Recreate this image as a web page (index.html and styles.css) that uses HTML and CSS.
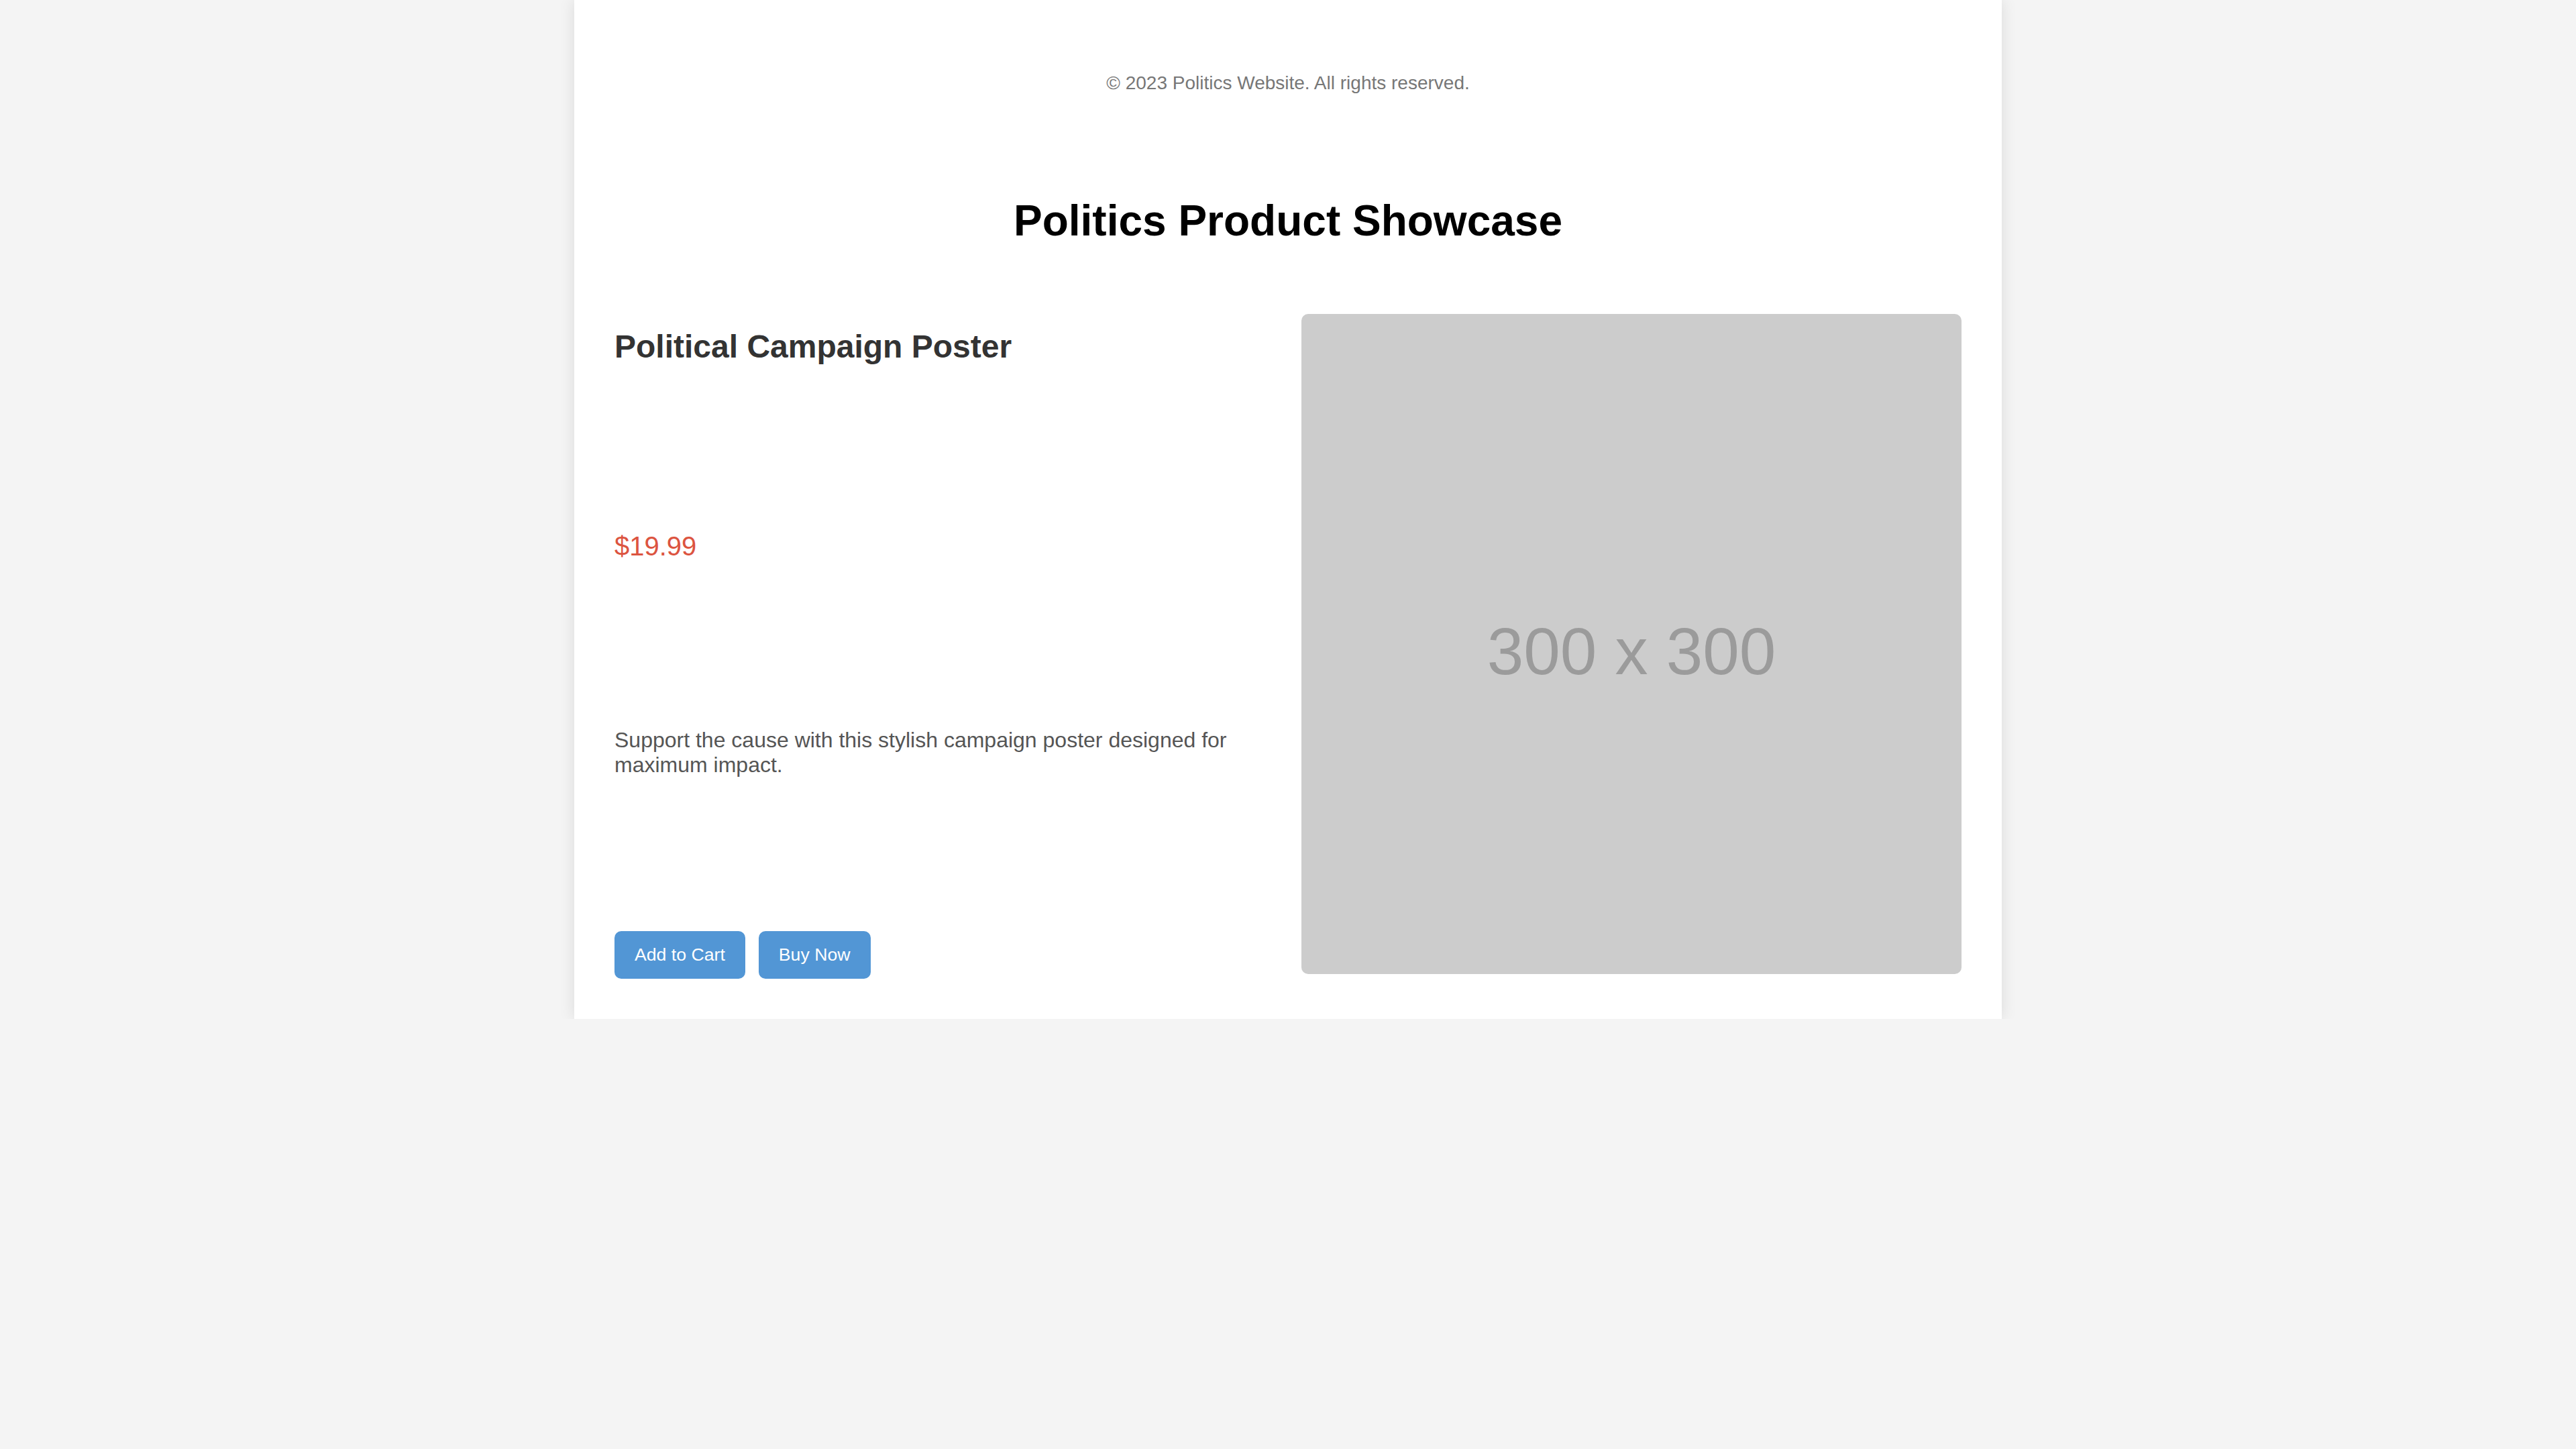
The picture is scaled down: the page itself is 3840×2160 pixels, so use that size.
FILE: index.html
```html
<!DOCTYPE html>
<html lang="en">
<head>
<meta charset="utf-8">
<title>Politics Product Showcase</title>
<link rel="stylesheet" href="styles.css">
</head>
<body>
<div class="card">
  <p class="copyright">&copy; 2023 Politics Website. All rights reserved.</p>
  <h1 class="title">Politics Product Showcase</h1>
  <div class="product">
    <div class="info">
      <h2 class="name">Political Campaign Poster</h2>
      <p class="price">$19.99</p>
      <p class="desc">Support the cause with this stylish campaign poster designed for maximum impact.</p>
      <div class="actions">
        <button class="btn">Add to Cart</button>
        <button class="btn">Buy Now</button>
      </div>
    </div>
    <div class="media">
      <div class="placeholder">300 x 300</div>
    </div>
  </div>
</div>
</body>
</html>
```

FILE: styles.css
```css
html, body {
  margin: 0;
  padding: 0;
}

body {
  background: #f4f4f4;
  font-family: "Liberation Sans", Arial, Helvetica, sans-serif;
  font-size: 32px;
  color: #333;
}

.card {
  width: 2128px;
  margin: 0 auto;
  padding: 0 60px 60px;
  box-sizing: border-box;
  background: #fff;
  box-shadow: 0 0 22px rgba(0, 0, 0, 0.11);
}

.copyright {
  margin: 0;
  padding-top: 108px;
  font-size: 28px;
  line-height: normal;
  color: #777;
  text-align: center;
}

.title {
  margin: 152px 0 102px;
  font-size: 64px;
  font-weight: bold;
  line-height: normal;
  color: #000;
  text-align: center;
}

.product {
  display: flex;
  gap: 40px;
}

.info {
  flex: 1;
  display: flex;
  flex-direction: column;
  justify-content: space-between;
}

.name {
  margin: 20px 0;
  padding-top: 1px;
  font-size: 48px;
  font-weight: bold;
  line-height: normal;
  color: #333;
}

.price {
  margin: 20px 0;
  font-size: 40px;
  line-height: normal;
  color: #dc5440;
}

.desc {
  margin: 21px 0 21px;
  font-size: 32px;
  line-height: normal;
  color: #555;
}

.actions {
  display: flex;
  gap: 20px;
}

.btn {
  padding: 20px 30px;
  border: none;
  border-radius: 10px;
  background: #5296d5;
  color: #fff;
  font-family: "Liberation Sans", Arial, Helvetica, sans-serif;
  font-size: 26.67px;
  line-height: normal;
  cursor: pointer;
}

.media {
  flex: 1;
  padding-bottom: 7px;
}

.placeholder {
  height: 984px;
  box-sizing: border-box;
  padding-top: 22px;
  border-radius: 10px;
  background: #ccc;
  color: #9b9b9b;
  font-size: 98px;
  display: flex;
  align-items: center;
  justify-content: center;
}
```
